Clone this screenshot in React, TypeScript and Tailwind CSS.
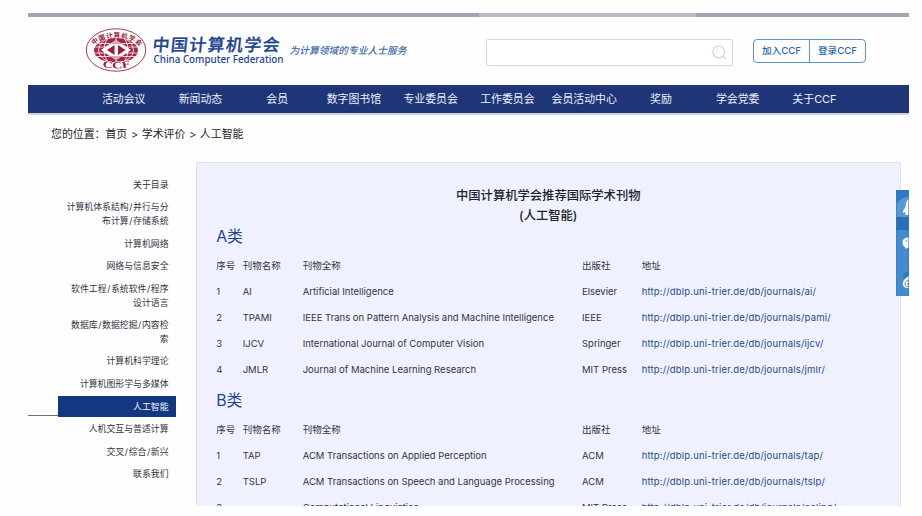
import React from "react";

const NAV = ["活动会议", "新闻动态", "会员", "数字图书馆", "专业委员会", "工作委员会", "会员活动中心", "奖励", "学会党委", "关于CCF"];

const SIDEBAR: string[][] = [
  ["关于目录"],
  ["计算机体系结构/并行与分", "布计算/存储系统"],
  ["计算机网络"],
  ["网络与信息安全"],
  ["软件工程/系统软件/程序", "设计语言"],
  ["数据库/数据挖掘/内容检", "索"],
  ["计算机科学理论"],
  ["计算机图形学与多媒体"],
  ["人工智能"],
  ["人机交互与普适计算"],
  ["交叉/综合/新兴"],
  ["联系我们"],
];

type Journal = [string, string, string, string, string];

const CLASS_A: Journal[] = [
  ["1", "AI", "Artificial Intelligence", "Elsevier", "ai"],
  ["2", "TPAMI", "IEEE Trans on Pattern Analysis and Machine Intelligence", "IEEE", "pami"],
  ["3", "IJCV", "International Journal of Computer Vision", "Springer", "ijcv"],
  ["4", "JMLR", "Journal of Machine Learning Research", "MIT Press", "jmlr"],
];

const CLASS_B: Journal[] = [
  ["1", "TAP", "ACM Transactions on Applied Perception", "ACM", "tap"],
  ["2", "TSLP", "ACM Transactions on Speech and Language Processing", "ACM", "tslp"],
  ["3", "", "Computational Linguistics", "MIT Press", "coling"],
];

function Seal() {
  return (
    <svg viewBox="0 0 62 44" className="h-[44px] w-[62px] shrink-0">
      <defs>
        <path id="sealTop" d="M8.3 17.5 A26 15.5 0 0 1 53.7 17.5" />
        <path id="sealBottom" d="M13 37 Q31 44 49 37" />
        <clipPath id="globe"><ellipse cx="31" cy="22.5" rx="22" ry="12.5" /></clipPath>
      </defs>
      <ellipse cx="31" cy="22" rx="29.7" ry="21.2" fill="#fff" stroke="#9b2440" strokeWidth="0.9" />
      <g clipPath="url(#globe)">
        <rect width="62" height="44" fill="#a32642" />
        <g fill="none" stroke="#fff" strokeWidth="0.8">
          <ellipse cx="31" cy="22" rx="17.5" ry="13" />
          <ellipse cx="31" cy="22" rx="12" ry="16" />
          <path d="M8 15.5H54M8 19H54M8 25H54M8 28.5H54M31 8V36" />
        </g>
        <path d="M31 11.5 L46 22 L31 32.5 L16 22Z" fill="#fff" />
      </g>
      <path d="M29.5 17V27L22 22Z M33 17V27L40.5 22Z" fill="#9b1b3a" />
      <path d="M27 13h8M24.5 15h13M27 31h8M24.5 29h13" stroke="#a32642" strokeWidth="0.8" />
      <text fontFamily="Noto Sans CJK SC, sans-serif" fontSize="6.6" fontWeight="700" fill="#9b2440">
        <textPath href="#sealTop" startOffset="0.5" textLength="50">中国计算机学会</textPath>
      </text>
      <text fontFamily="Liberation Serif, serif" fontSize="9.5" fontWeight="700" fill="#9b1b3a" stroke="#fff" strokeWidth="1.2" paintOrder="stroke">
        <textPath href="#sealBottom" startOffset="4.5" textLength="29" lengthAdjust="spacingAndGlyphs">CCF</textPath>
      </text>
    </svg>
  );
}

function Wordmark() {
  return (
    <svg viewBox="0 0 260 44" className="h-[44px] w-[260px] shrink-0 text-[#1d4391]" fill="currentColor">
      <g transform="translate(5 22.8) skewX(-6)">
        <text fontFamily="Noto Sans CJK SC, sans-serif" fontSize="17" fontWeight="500" stroke="currentColor" strokeWidth="0.3" textLength="127">中国计算机学会</text>
      </g>
      <text x="6.5" y="34.7" fontFamily="Noto Sans, sans-serif" fontSize="11.6" fontWeight="500" textLength="130" lengthAdjust="spacingAndGlyphs">China Computer Federation</text>
      <g transform="translate(142.5 26) skewX(-14)" className="text-[#4268a8]">
        <text fontFamily="Noto Sans CJK SC, sans-serif" fontSize="9.7" fontWeight="500" fill="currentColor" textLength="117">为计算领域的专业人士服务</text>
      </g>
    </svg>
  );
}

function SideDock() {
  return (
    <svg viewBox="0 0 13 106" className="absolute left-[896px] top-[190px] h-[106px] w-[13px]">
      <rect width="13" height="106" fill="#448bd1" />
      <rect width="13" height="14" fill="#2f78c3" />
      <path d="M0 14Q6 7 13 6V28H0Z" fill="#5799d8" />
      <rect y="27" width="13" height="13" fill="#286fba" />
      <path d="M7 84L13 81V90L8 91Z" fill="#2f78c3" />
      <path d="M13 9C10 10 9.8 15 9.5 17L7 21C6.7 23.5 7.5 23 9 22L9.6 25H13Z" fill="#fff" />
      <path d="M13 47.5C9 47 6.5 49.5 6.5 52.5C6.5 55 8 57 9.5 57.5L9.5 59L11.5 57.8H13Z" fill="#fff" />
      <circle cx="10.4" cy="51" r="0.8" fill="#5f8fae" />
      <path d="M13 86C9 88 6.5 91 6.7 94C7 97 10 98.3 13 98.3Z" fill="#fff" />
      <path d="M13 90.5C10.2 90.5 9 92 9 94S11 97 13 96.7" fill="none" stroke="#397faf" strokeWidth="0.9" />
      <path d="M13 93h-1.5v1.7H13" fill="#397faf" />
      <path d="M0.5 0V106M12.5 0V106" stroke="#357bb9" strokeWidth="0.6" />
    </svg>
  );
}

function SidebarLine({ text }: { text: string }) {
  return (
    <div className="whitespace-nowrap">
      {text.split("/").map((part, i) => (
        <React.Fragment key={part}>
          {i > 0 && <span className="px-[0.6px]">/</span>}
          {part}
        </React.Fragment>
      ))}
    </div>
  );
}

const ROW = "grid h-[26.05px] grid-cols-[26.5px_60px_279.3px_59.7px_1fr] items-center whitespace-nowrap pb-px text-[9.5px] leading-[14px]";

function JournalTable({ title, rows }: { title: string; rows: Journal[] }) {
  return (
    <section>
      <h2 className="flex h-[33.6px] items-center pt-px text-[15.8px] leading-5 text-[#1d4694]">{title}</h2>
      <div className={ROW}>
        <span>序号</span>
        <span>刊物名称</span>
        <span>刊物全称</span>
        <span>出版社</span>
        <span>地址</span>
      </div>
      {rows.map(([no, abbr, name, press, slug]) => (
        <div key={no} className={ROW}>
          <span>{no}</span>
          <span>{abbr}</span>
          <span>{name}</span>
          <span>{press}</span>
          <a className="tracking-[0.17px] text-[#234a8c]">{`http://dblp.uni-trier.de/db/journals/${slug}/`}</a>
        </div>
      ))}
    </section>
  );
}

export default function App() {
  return (
    <div className="relative h-[516px] w-[922px] overflow-hidden bg-[#fefefe] pt-[13px] font-[Inter,'Noto_Sans_CJK_SC',sans-serif] text-[#30343e]">
      <div className="ml-[27.5px] flex h-[493px] w-[881px] flex-col overflow-hidden">
        <div className="flex h-1 shrink-0 bg-[#a1a5af]">
          <div className="ml-[451px] h-1 w-[217px] bg-[#b7bbc4]" />
        </div>

        <header className="flex h-[68px] shrink-0 pl-[57.5px]">
          <div className="flex h-[44px] pt-[11px]">
            <Seal />
            <Wordmark />
          </div>
          <div className="ml-[79px] mt-[22px] flex h-[27px] w-[247px] shrink-0 items-center justify-end rounded-[2px] border border-[#d5d7dc] bg-white pr-[5px]">
            <svg viewBox="0 0 15 15" className="h-[15px] w-[15px]" fill="none" stroke="#d3d6e1">
              <circle cx="6.8" cy="6.8" r="5.9" strokeWidth="1.4" />
              <path d="M11 11L14 14" strokeWidth="1.5" />
              <path d="M4 6.3Q4.5 4.2 6.3 4" strokeWidth="0.8" />
            </svg>
          </div>
          <div className="ml-[20px] mt-[22px] flex h-[24px] w-[113px] shrink-0 rounded-[4px] border border-[#5f94c9] text-[9.6px] font-medium text-[#2a67b0]">
            <span className="flex flex-1 items-center justify-center border-r border-[#5f94c9]">加入CCF</span>
            <span className="flex flex-1 items-center justify-center">登录CCF</span>
          </div>
        </header>

        <nav className="flex h-[28px] shrink-0 border-b border-[#243566] bg-[#1e3577] pl-[57.8px] pt-px text-[10.9px] text-[#eef1fa]">
          {NAV.map((item) => (
            <span key={item} className="flex w-[76.75px] shrink-0 items-center justify-center whitespace-nowrap">{item}</span>
          ))}
        </nav>
        <div className="h-[2px] shrink-0 bg-[#cfd2e6]" />

        <p className="flex h-[47px] shrink-0 items-start whitespace-pre pl-[23.5px] pt-[11px] text-[10.9px] leading-[16px] text-[#1d1f24] [word-spacing:0.6px]">
          您的位置：首页 &gt; 学术评价 &gt; 人工智能
        </p>

        <div className="flex min-h-0 flex-1">
          <aside className="w-[148px] shrink-0 pt-[11.4px] text-right text-[8.87px] leading-[13.7px]">
            {SIDEBAR.map((lines) =>
              lines[0] === "人工智能" ? (
                <div key={lines[0]} className="flex h-[22.6px] items-start pt-px">
                  <div className="h-[20px] w-[30.5px] border-b border-[#62718e]" />
                  <div className="flex h-[20.5px] flex-1 items-center justify-end bg-[#133880] pr-[7px] pt-px text-[#f0f3fb]">{lines[0]}</div>
                </div>
              ) : (
                <div key={lines[0]} className="py-[4.45px] pr-[7px]">
                  {lines.map((line) => (
                    <SidebarLine key={line} text={line} />
                  ))}
                </div>
              )
            )}
          </aside>

          <main className="ml-[20px] h-[420px] w-[705.5px] shrink-0 border border-[#dfe2ec] bg-[#eff2fe] pl-[19.7px]">
            <h1 className="mr-[19.7px] h-[57px] pt-[23px] text-center text-[12.3px] font-medium leading-[20px] text-[#20222b]">
              <span className="block">中国计算机学会推荐国际学术刊物</span>
              <span className="block">(人工智能)</span>
            </h1>
            <JournalTable title="A类" rows={CLASS_A} />
            <JournalTable title="B类" rows={CLASS_B} />
          </main>
        </div>
      </div>
      <SideDock />
    </div>
  );
}
